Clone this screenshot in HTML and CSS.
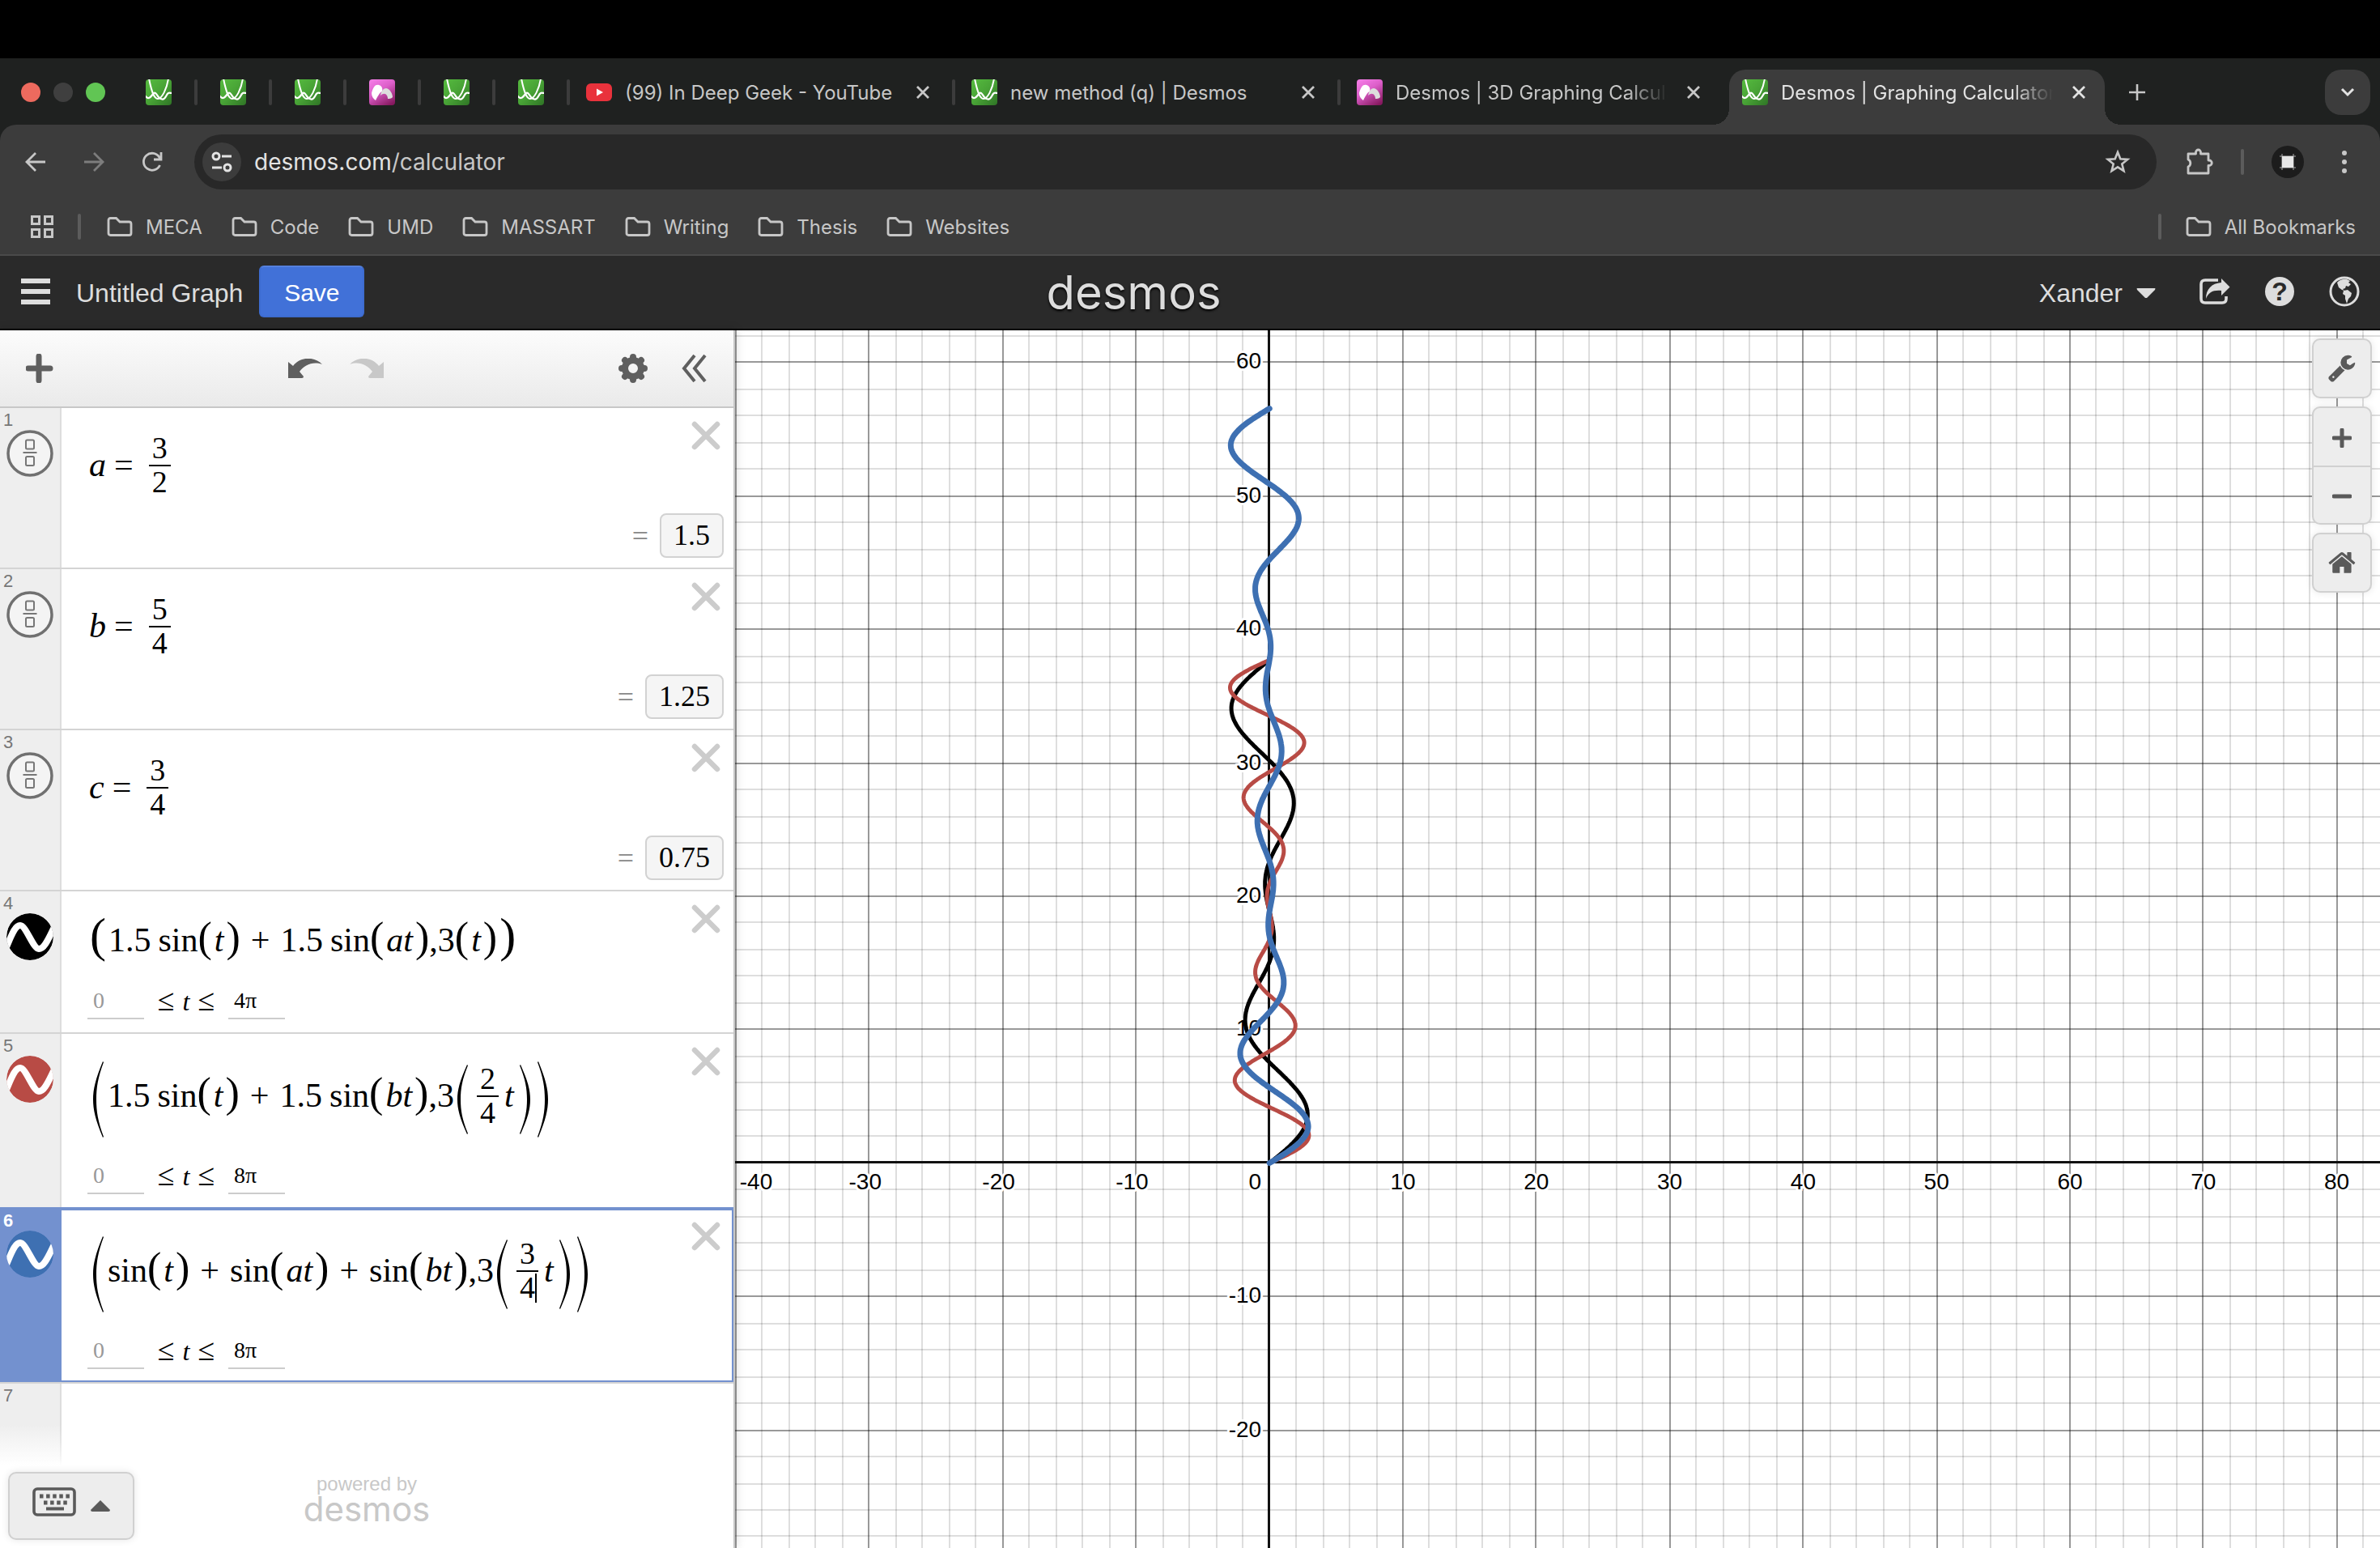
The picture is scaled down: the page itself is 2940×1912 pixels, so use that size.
FILE: index.html
```html
<!DOCTYPE html>
<html lang="en">
<head>
<meta charset="utf-8">
<title>Desmos | Graphing Calculator</title>
<link rel="stylesheet" href="styles.css">
</head>
<body>
<svg class="defs" width="0" height="0" aria-hidden="true">
  <defs>
    <linearGradient id="green" x1="0" y1="0" x2="1" y2="1"><stop offset="0" stop-color="#56bb3f"/><stop offset=".5" stop-color="#48a336"/><stop offset="1" stop-color="#2f7426"/></linearGradient>
    <linearGradient id="pink" x1="0.2" y1="0" x2="0.8" y2="1"><stop offset="0" stop-color="#f27be4"/><stop offset=".4" stop-color="#dd5fca"/><stop offset="1" stop-color="#86195f"/></linearGradient>
    <clipPath id="round32"><rect width="32" height="32" rx="4"/></clipPath>
    <clipPath id="disc"><circle cx="29" cy="29" r="29"/></clipPath>
    <symbol id="fav2d" viewBox="0 0 32 32"><g clip-path="url(#round32)"><rect width="32" height="32" fill="url(#green)"/><path d="M4 -1C7 14 10 24 15 24S26 12 28 -1" fill="none" stroke="#fff" stroke-width="2"/><path d="M-1 20C3 26 6 22 9 18S14 20 16 22S22 27 25 21S29 17 33 17" fill="none" stroke="#fff" stroke-width="2.200"/></g></symbol>
    <symbol id="fav3d" viewBox="0 0 32 32"><g clip-path="url(#round32)"><rect width="32" height="32" fill="url(#pink)"/><path d="M3 17C5 9 8 6 12 7C16 8 17 12 16 15C13 16 10 22 8 26C5 24 3 21 3 17Z" fill="#fff"/><path d="M14 20C15 14 18 11 21 11C26 12 29 18 29 22C27 24 25 24 23 24C23 19 19 15 14 20Z" fill="#ddd"/></g></symbol>
    <symbol id="cross" viewBox="0 0 20 20"><path d="M3 3L17 17M17 3L3 17" fill="none" stroke="currentColor" stroke-width="2.800"/></symbol>
    <symbol id="folder" viewBox="0 0 32 26"><path d="M2 5Q2 2.500 4.500 2.500H11.500L16 7H27.500Q30 7 30 9.500V21Q30 23.500 27.500 23.500H4.500Q2 23.500 2 21Z" fill="none" stroke="currentColor" stroke-width="2.800"/></symbol>
    <symbol id="frac" viewBox="0 0 58 58"><circle cx="29" cy="29" r="27" fill="#f4f4f4" stroke="#707070" stroke-width="3.500"/><g fill="none" stroke="#777" stroke-width="2"><rect x="24" y="12.500" width="10" height="11" rx="1.500"/><rect x="24" y="33" width="10" height="11" rx="1.500"/><path d="M20.500 28H37.500"/></g></symbol>
    <symbol id="wave" viewBox="0 0 58 58"><g clip-path="url(#disc)"><circle cx="29" cy="29" r="29" fill="currentColor"/><path d="M-1 44C6 28 10 15 17 15S33 44 40 44S52 31 59 17" fill="none" stroke="#fff" stroke-width="8"/></g></symbol>
    <symbol id="delete" viewBox="0 0 36 36"><path d="M4 4L32 32M32 4L4 32" fill="none" stroke="currentColor" stroke-width="6.500" stroke-linecap="round"/></symbol>
    <symbol id="tallL" viewBox="0 0 13 94" preserveAspectRatio="none"><path d="M12 0C3 22 0 34 0 47S3 72 12 94L13 93C6 74 4 62 4 47S6 20 13 1Z" fill="#000"/></symbol>
    <symbol id="tallR" viewBox="0 0 13 94" preserveAspectRatio="none"><path d="M1 0C10 22 13 34 13 47S10 72 1 94L0 93C7 74 9 62 9 47S7 20 0 1Z" fill="#000"/></symbol>
  </defs>
</svg>

<div class="menubar"></div>

<div class="browser">
  <div class="tabstrip">
    <div class="lights"><i class="red"></i><i class="dim"></i><i class="green"></i></div>
    <div class="pinned">
      <div class="pin"><svg class="fav"><use href="#fav2d"/></svg></div>
      <div class="pin"><svg class="fav"><use href="#fav2d"/></svg></div>
      <div class="pin"><svg class="fav"><use href="#fav2d"/></svg></div>
      <div class="pin"><svg class="fav"><use href="#fav3d"/></svg></div>
      <div class="pin"><svg class="fav"><use href="#fav2d"/></svg></div>
      <div class="pin"><svg class="fav"><use href="#fav2d"/></svg></div>
    </div>
    <div class="tab sep">
      <svg class="fav" viewBox="0 0 32 32"><rect y="5" width="32" height="22" rx="6" fill="#e9323c"/><path d="M13 11.500L21 16L13 20.500Z" fill="#fff"/></svg>
      <span class="tab-title">(99) In Deep Geek - YouTube</span>
      <button class="icon-btn" aria-label="Close tab"><svg class="x"><use href="#cross"/></svg></button>
    </div>
    <div class="tab sep">
      <svg class="fav"><use href="#fav2d"/></svg>
      <span class="tab-title">new method (q) | Desmos</span>
      <button class="icon-btn" aria-label="Close tab"><svg class="x"><use href="#cross"/></svg></button>
    </div>
    <div class="tab">
      <svg class="fav"><use href="#fav3d"/></svg>
      <span class="tab-title fade">Desmos | 3D Graphing Calculator</span>
      <button class="icon-btn" aria-label="Close tab"><svg class="x"><use href="#cross"/></svg></button>
    </div>
    <div class="tab active">
      <svg class="fav"><use href="#fav2d"/></svg>
      <span class="tab-title fade">Desmos | Graphing Calculator</span>
      <button class="icon-btn" aria-label="Close tab"><svg class="x"><use href="#cross"/></svg></button>
    </div>
    <button class="icon-btn newtab" aria-label="New tab"><svg width="22" height="22" viewBox="0 0 22 22"><path d="M11 1V21M1 11H21" stroke="#c7c7c7" stroke-width="2.600"/></svg></button>
    <button class="icon-btn tabsearch" aria-label="Search tabs"><svg width="20" height="14" viewBox="0 0 20 14"><path d="M3 3L10 10L17 3" fill="none" stroke="#e3e3e3" stroke-width="3"/></svg></button>
  </div>

  <div class="chrome">
    <div class="toolbar">
      <button class="icon-btn nav" aria-label="Back"><svg width="26" height="26" viewBox="0 0 26 26"><path d="M25 13H3M13 2L2 13L13 24" fill="none" stroke="#c7c7c7" stroke-width="2.800"/></svg></button>
      <button class="icon-btn nav" aria-label="Forward"><svg width="26" height="26" viewBox="0 0 26 26"><path d="M1 13H23M13 2L24 13L13 24" fill="none" stroke="#7d7d7d" stroke-width="2.800"/></svg></button>
      <button class="icon-btn nav" aria-label="Reload"><svg width="26" height="26" viewBox="0 0 26 26"><path d="M22.500 17A10.500 10.500 0 1 1 22 7.500L23.500 10M24 1V10H15" fill="none" stroke="#c7c7c7" stroke-width="2.800"/></svg></button>
      <div class="omnibox">
        <button class="icon-btn site" aria-label="Site information"><svg width="28" height="26" viewBox="0 0 28 26"><g fill="none" stroke="#e3e3e3" stroke-width="3"><circle cx="7" cy="6" r="4"/><circle cx="21" cy="20" r="4"/><path d="M14 6H26M2 20H14"/></g></svg></button>
        <span class="url">desmos.com<span>/calculator</span></span>
        <button class="icon-btn" aria-label="Bookmark this tab"><svg width="32" height="32" viewBox="0 0 32 32"><path d="M16 4L19.300 12.300L28.200 12.900L21.300 18.500L23.500 27.200L16 22.400L8.500 27.200L10.700 18.500L3.800 12.900L12.700 12.300Z" fill="none" stroke="#c7c7c7" stroke-width="2.600"/></svg></button>
      </div>
      <div class="actions">
        <button class="icon-btn" aria-label="Extensions"><svg width="34" height="34" viewBox="0 0 34 34"><path d="M3 7H12.500V5A3 3 0 0 1 18.500 5V7H28V15H29A3.200 3.200 0 0 1 29 21.500H28V31H3V23A5 5 0 0 0 3 14Z" fill="none" stroke="#c7c7c7" stroke-width="2.800" stroke-linejoin="round"/></svg></button>
        <i class="vsep"></i>
        <button class="icon-btn" aria-label="Profile"><svg width="40" height="40" viewBox="0 0 40 40"><circle cx="20" cy="20" r="20" fill="#1c1c1c"/><path d="M13 10V30M27 10V30M10 13H30M10 27H30" stroke="#aaa" stroke-width="1"/><rect x="13" y="13" width="14" height="14" fill="#e6e6e6"/></svg></button>
        <button class="icon-btn" aria-label="Menu"><svg width="8" height="30" viewBox="0 0 8 30"><g fill="#c7c7c7"><circle cx="4" cy="4" r="3"/><circle cx="4" cy="15" r="3"/><circle cx="4" cy="26" r="3"/></g></svg></button>
      </div>
    </div>
    <div class="bookmarks">
      <button class="icon-btn" aria-label="Tab groups"><svg width="28" height="28" viewBox="0 0 28 28"><g fill="none" stroke="#c7c7c7" stroke-width="3"><rect x="1.500" y="1.500" width="9" height="9"/><rect x="17.500" y="1.500" width="9" height="9"/><rect x="1.500" y="17.500" width="9" height="9"/><rect x="17.500" y="17.500" width="9" height="9"/></g></svg></button>
      <i class="vsep"></i>
      <a class="bm" href="#"><svg class="folder"><use href="#folder"/></svg>MECA</a>
      <a class="bm" href="#"><svg class="folder"><use href="#folder"/></svg>Code</a>
      <a class="bm" href="#"><svg class="folder"><use href="#folder"/></svg>UMD</a>
      <a class="bm" href="#"><svg class="folder"><use href="#folder"/></svg>MASSART</a>
      <a class="bm" href="#"><svg class="folder"><use href="#folder"/></svg>Writing</a>
      <a class="bm" href="#"><svg class="folder"><use href="#folder"/></svg>Thesis</a>
      <a class="bm" href="#"><svg class="folder"><use href="#folder"/></svg>Websites</a>
      <i class="vsep last"></i>
      <a class="bm" href="#"><svg class="folder"><use href="#folder"/></svg>All Bookmarks</a>
    </div>
  </div>
</div>

<header class="dheader">
  <div class="dleft">
    <button class="icon-btn" aria-label="Open graph menu"><svg width="36" height="32" viewBox="0 0 36 32"><path d="M0 3H36M0 16H36M0 29H36" stroke="#ddd" stroke-width="6"/></svg></button>
    <span class="graph-title">Untitled Graph</span>
    <button class="save">Save</button>
  </div>
  <a class="wordmark" href="#">desmos</a>
  <div class="dright">
    <button class="account"><span>Xander</span><svg width="26" height="14" viewBox="0 0 26 14"><path d="M2 1H24Q25 1 24 3L14 13H12L2 3Q1 1 2 1Z" fill="#ddd"/></svg></button>
    <button class="icon-btn" aria-label="Share"><svg width="38" height="32" viewBox="0 0 38 32"><path d="M23 2H7Q2 2 2 7V25Q2 30 7 30H28Q33 30 33 25V22" fill="none" stroke="#ddd" stroke-width="3.600"/><path d="M27 0L37.500 10.500L27 21V15C17 14 11 17 8 25C8 13 15 6 27 5Z" fill="#ddd"/></svg></button>
    <button class="icon-btn" aria-label="Help"><span class="help">?</span></button>
    <button class="icon-btn" aria-label="Language"><svg width="38" height="38" viewBox="0 0 38 38"><circle cx="19" cy="19" r="17" fill="none" stroke="#ddd" stroke-width="3"/><path d="M10 8Q15 3 22 4L26 6L24 8L27 10L24 13L21 12L20 15L17 16L19 18L16 17L12 14Z" fill="#ddd"/><path d="M18 18L23 17L28 21L27 25L24 28L22 34L20 28L20 24L17 22Z" fill="#ddd"/></svg></button>
  </div>
</header>

<main class="calc">
  <section class="panel" aria-label="Expression list">
    <div class="ptools">
      <button class="icon-btn" aria-label="Add item"><svg width="34" height="36" viewBox="0 0 34 36"><path d="M16 3V33M3 18H30" stroke="#5f5f5f" stroke-width="7" stroke-linecap="round"/></svg></button>
      <div class="undo">
        <button class="icon-btn" aria-label="Undo"><svg width="42" height="24" viewBox="0 0 42 24"><path d="M0 4L6 9C16 -4 34 -2 42 7C30 3 20 8 14 16L19 22Q19 24 17 24H0Z" fill="#5f5f5f"/></svg></button>
        <button class="icon-btn" aria-label="Redo"><svg width="42" height="24" viewBox="0 0 42 24"><path d="M42 4L36 9C26 -4 8 -2 0 7C12 3 22 8 28 16L23 22Q23 24 25 24H42Z" fill="#c8c8c8"/></svg></button>
      </div>
      <div class="pright">
        <button class="icon-btn" aria-label="Edit list"><svg width="36" height="36" viewBox="-18 -18 36 36"><g stroke="#5f5f5f" stroke-width="8" stroke-linecap="round"><path d="M0 -14V-10M0 14V10M-14 0H-10M14 0H10M-10 -10L-8 -8M10 10L8 8M-10 10L-8 8M10 -10L8 -8"/></g><circle r="10" fill="none" stroke="#5f5f5f" stroke-width="8"/></svg></button>
        <button class="icon-btn" aria-label="Hide list"><svg width="34" height="36" viewBox="0 0 34 36"><path d="M18 2L5 18L18 34M31 2L18 18L31 34" fill="none" stroke="#5f5f5f" stroke-width="4"/></svg></button>
      </div>
    </div>

    <div class="list">
      <div class="row">
        <div class="gutter"><span>1</span><svg class="badge"><use href="#frac"/></svg></div>
        <div class="body">
          <div class="math"><i>a</i><span class="eq">=</span><span class="fraction"><span>3</span><span>2</span></span></div>
          <div class="result"><span>=</span><output>1.5</output></div>
        </div>
        <button class="icon-btn del" aria-label="Delete"><svg><use href="#delete"/></svg></button>
      </div>
      <div class="row">
        <div class="gutter"><span>2</span><svg class="badge"><use href="#frac"/></svg></div>
        <div class="body">
          <div class="math"><i>b</i><span class="eq">=</span><span class="fraction"><span>5</span><span>4</span></span></div>
          <div class="result"><span>=</span><output>1.25</output></div>
        </div>
        <button class="icon-btn del" aria-label="Delete"><svg><use href="#delete"/></svg></button>
      </div>
      <div class="row">
        <div class="gutter"><span>3</span><svg class="badge"><use href="#frac"/></svg></div>
        <div class="body">
          <div class="math"><i>c</i><span class="eq">=</span><span class="fraction"><span>3</span><span>4</span></span></div>
          <div class="result"><span>=</span><output>0.75</output></div>
        </div>
        <button class="icon-btn del" aria-label="Delete"><svg><use href="#delete"/></svg></button>
      </div>
      <div class="row">
        <div class="gutter"><span>4</span><svg class="badge black"><use href="#wave"/></svg></div>
        <div class="body">
          <div class="math"><span class="p2">(</span>1.5<span class="fn">sin</span><span class="p1">(</span><i>t</i><span class="p1">)</span><span class="op">+</span>1.5<span class="fn">sin</span><span class="p1">(</span><i>at</i><span class="p1">)</span>,3<span class="p1">(</span><i>t</i><span class="p1">)</span><span class="p2">)</span></div>
          <div class="domain"><input aria-label="Minimum t" placeholder="0"><span>≤<i>t</i>≤</span><input aria-label="Maximum t" value="4π"></div>
        </div>
        <button class="icon-btn del" aria-label="Delete"><svg><use href="#delete"/></svg></button>
      </div>
      <div class="row">
        <div class="gutter"><span>5</span><svg class="badge brick"><use href="#wave"/></svg></div>
        <div class="body">
          <div class="math"><svg class="tall"><use href="#tallL"/></svg>1.5<span class="fn">sin</span><span class="p1">(</span><i>t</i><span class="p1">)</span><span class="op">+</span>1.5<span class="fn">sin</span><span class="p1">(</span><i>bt</i><span class="p1">)</span>,3<svg class="tall in"><use href="#tallL"/></svg><span class="fraction"><span>2</span><span>4</span></span><i>t</i><svg class="tall in"><use href="#tallR"/></svg><svg class="tall"><use href="#tallR"/></svg></div>
          <div class="domain"><input aria-label="Minimum t" placeholder="0"><span>≤<i>t</i>≤</span><input aria-label="Maximum t" value="8π"></div>
        </div>
        <button class="icon-btn del" aria-label="Delete"><svg><use href="#delete"/></svg></button>
      </div>
      <div class="row selected">
        <div class="gutter"><span>6</span><svg class="badge blue"><use href="#wave"/></svg></div>
        <div class="body">
          <div class="math"><svg class="tall"><use href="#tallL"/></svg>sin<span class="p1">(</span><i>t</i><span class="p1">)</span><span class="op">+</span>sin<span class="p1">(</span><i>at</i><span class="p1">)</span><span class="op">+</span>sin<span class="p1">(</span><i>bt</i><span class="p1">)</span>,3<svg class="tall in"><use href="#tallL"/></svg><span class="fraction"><span>3</span><span class="caret">4</span></span><i>t</i><svg class="tall in"><use href="#tallR"/></svg><svg class="tall"><use href="#tallR"/></svg></div>
          <div class="domain"><input aria-label="Minimum t" placeholder="0"><span>≤<i>t</i>≤</span><input aria-label="Maximum t" value="8π"></div>
        </div>
        <button class="icon-btn del" aria-label="Delete"><svg><use href="#delete"/></svg></button>
      </div>
      <div class="row empty">
        <div class="gutter"><span>7</span></div>
        <div class="body"></div>
      </div>
    </div>

    <div class="pfoot">
      <button class="keypad" aria-label="Show keypad">
        <svg width="54" height="36" viewBox="0 0 54 36"><rect x="2" y="2" width="50" height="32" rx="4" fill="none" stroke="#5a5a5a" stroke-width="3.600"/><path d="M9 11H46" stroke="#5a5a5a" stroke-width="5" stroke-dasharray="4.500 3.600"/><path d="M14 19H43" stroke="#5a5a5a" stroke-width="5" stroke-dasharray="4.500 3.600"/><path d="M17 26.500H39" stroke="#5a5a5a" stroke-width="4"/></svg>
        <svg width="24" height="14" viewBox="0 0 24 14"><path d="M12 0L24 12Q24 14 22 14H2Q0 14 0 12Z" fill="#5a5a5a"/></svg>
      </button>
      <a class="powered" href="#"><span>powered by</span><b>desmos</b></a>
    </div>
  </section>

  <section class="graph" aria-label="Graph">
    <svg id="plot" role="img" aria-label="Three parametric curves"></svg>
    <div class="gtools">
      <button class="gbtn" aria-label="Graph settings"><svg width="34" height="34" viewBox="90 90 1650 1700"><path fill="#5a5a5a" d="M448 1472q0-26-19-45t-45-19-45 19-19 45 19 45 45 19 45-19 19-45zm644-420l-682 682q-37 37-90 37-52 0-91-37l-106-108q-38-36-38-90 0-53 38-91l681-681q39 98 114.500 173.500t173.500 114.500zm634-435q0 39-23 106-47 134-164.500 217.500t-258.500 83.500q-185 0-316.500-131.500t-131.500-316.500 131.500-316.500 316.500-131.500q58 0 121.500 16.500t107.500 46.500q16 11 16 28t-16 28l-293 169v224l193 107q5-3 79-48.500t135.500-81 70.500-35.500q15 0 23.500 10t8.500 25z"/></svg></button>
      <div class="zoom">
        <button aria-label="Zoom in"><svg width="24" height="24" viewBox="0 0 24 24"><path d="M12 2V22M2 12H22" stroke="#5a5a5a" stroke-width="5" stroke-linecap="round"/></svg></button>
        <button aria-label="Zoom out"><svg width="24" height="24" viewBox="0 0 24 24"><path d="M2 12H22" stroke="#5a5a5a" stroke-width="5" stroke-linecap="round"/></svg></button>
      </div>
      <button class="gbtn" aria-label="Default viewport"><svg width="34" height="34" viewBox="60 60 1680 1680"><path fill="#5a5a5a" d="M1472 992v480q0 26-19 45t-45 19h-384v-384h-256v384h-384q-26 0-45-19t-19-45v-480q0-1 .5-3t.5-3l575-474 575 474q1 2 1 6zm223-69l-62 74q-8 9-21 11h-3q-13 0-21-7l-692-577-692 577q-12 8-24 7-13-2-21-11l-62-74q-8-10-7-23.500t11-21.500l719-599q32-26 76-26t76 26l244 204v-195q0-14 9-23t23-9h192q14 0 23 9t9 23v408l219 182q10 8 11 21.500t-7 23.500z"/></svg></button>
    </div>
  </section>
</main>
<script src="graph.js"></script>
</body>
</html>
```

FILE: styles.css
```css
* { box-sizing: border-box; }

body {
  margin: 0;
  min-height: 100vh;
  display: flex;
  flex-direction: column;
  background: #fff;
  font-family: "Liberation Sans", Arial, sans-serif;
  color: #000;
}

button {
  margin: 0;
  padding: 0;
  border: 0;
  background: none;
  font: inherit;
  color: inherit;
}

a { color: inherit; text-decoration: none; }
svg { display: block; flex: none; }
.defs { position: absolute; }
.icon-btn { display: flex; align-items: center; justify-content: center; flex: none; }

/* Browser chrome */
.menubar { height: 72px; background: #000; }

.browser {
  background: #1f2120;
  font-family: Inter, "Noto Sans", sans-serif;
  color: #c7c7c7;
}

.tabstrip {
  display: flex;
  align-items: center;
  height: 82px;
  padding: 2px 12px 0 26px;
}

.lights { display: flex; gap: 16px; margin-right: 50px; }
.lights i { width: 24px; height: 24px; border-radius: 50%; }
.lights .red { background: #ed6a5e; }
.lights .dim { background: #3f3f3f; }
.lights .green { background: #61c554; }

.fav { width: 32px; height: 32px; }
.x { width: 20px; height: 20px; }

.pinned { display: flex; gap: 28px; }
.pin { display: flex; gap: 28px; }
.pin::after, .tab.sep::after {
  content: "";
  width: 4px;
  height: 32px;
  border-radius: 2px;
  background: #3c3c3c;
}

.tab {
  display: flex;
  align-items: center;
  width: 476px;
  height: 56px;
  padding-left: 20px;
  font-size: 24px;
}
.tab.sep .icon-btn { margin-right: 26px; }
.tab-title {
  flex: 1;
  min-width: 0;
  margin: 0 22px 0 16px;
  overflow: hidden;
  white-space: nowrap;
}
.tab:not(.sep) .icon-btn { margin-right: 30px; }
.fade { mask-image: linear-gradient(to right, #000 85%, transparent); }

.tab.active {
  position: relative;
  align-self: flex-end;
  width: 464px;
  height: 68px;
  margin-left: 4px;
  padding: 0 0 12px 16px;
  border-radius: 20px 20px 0 0;
  background: #3c3c3c;
  color: #e3e3e3;
}
.tab.active .icon-btn { margin-right: 22px; }
.tab.active::before, .tab.active::after {
  content: "";
  position: absolute;
  bottom: 0;
  width: 20px;
  height: 20px;
}
.tab.active::before { left: -20px; background: radial-gradient(circle at 0 0, transparent 20px, #3c3c3c 20px); }
.tab.active::after { right: -20px; background: radial-gradient(circle at 100% 0, transparent 20px, #3c3c3c 20px); }

.newtab { margin-left: 29px; }
.tabsearch {
  width: 56px;
  height: 56px;
  margin-left: auto;
  border-radius: 20px;
  background: #3c3c3c;
}

.chrome {
  border-radius: 20px 20px 0 0;
  background: #3c3c3c;
  border-bottom: 2px solid #4a4a4a;
}

.toolbar {
  display: flex;
  align-items: center;
  padding: 12px 40px 12px 8px;
}
.nav { width: 72px; }
.omnibox {
  flex: 1;
  display: flex;
  align-items: center;
  gap: 16px;
  height: 68px;
  margin-left: 16px;
  padding: 0 32px 0 10px;
  border-radius: 34px;
  background: #282828;
}
.site { width: 48px; height: 48px; border-radius: 50%; background: #3c3c3c; }
.url { flex: 1; font-size: 28px; color: #e3e3e3; }
.url span { color: #c7c7c7; }
.actions { display: flex; align-items: center; gap: 34px; margin-left: 36px; }
.actions .icon-btn:last-child { margin-left: 12px; }
.vsep { width: 4px; height: 32px; border-radius: 2px; background: #5c5c5c; }

.bookmarks {
  display: flex;
  align-items: center;
  height: 68px;
  padding: 0 30px 0 38px;
  gap: 36px;
  font-size: 24px;
}
.bookmarks .vsep { margin: 0 -4px 0 -6px; }
.bookmarks .vsep.last { margin: 0 -6px 0 auto; }
.bm { display: flex; align-items: center; gap: 16px; white-space: nowrap; }
.folder { width: 32px; height: 26px; }

/* Calculator header */
.dheader {
  display: grid;
  grid-template-columns: 1fr auto 1fr;
  align-items: center;
  height: 92px;
  padding: 0 25px 2px 26px;
  border-bottom: 2px solid #000;
  background: #2a2a2a;
  color: #ddd;
  font-size: 32px;
}
.dleft { display: flex; align-items: center; }
.graph-title { margin: 0 20px 0 32px; padding-top: 4px; }
.save {
  width: 130px;
  height: 64px;
  padding-top: 4px;
  border: 2px solid #3d6cd0;
  border-top-color: #5580dc;
  border-radius: 6px;
  background: #4171d8;
  color: #fff;
  font-size: 30px;
}
.wordmark {
  margin-right: 140px;
  padding-top: 2px;
  font-family: Inter, sans-serif;
  font-size: 58px;
  line-height: 72px;
  text-shadow: 0 2px 3px #000;
}
.dright { display: flex; align-items: center; justify-content: flex-end; gap: 43px; }
.account { display: flex; align-items: center; gap: 16px; margin-right: 10px; padding-top: 4px; }
.help {
  width: 36px;
  height: 36px;
  border-radius: 50%;
  background: #ddd;
  color: #2a2a2a;
  font-size: 32px;
  font-weight: bold;
  line-height: 36px;
  text-align: center;
}

/* Expression panel */
.calc { flex: 1; display: flex; min-height: 0; }
.panel {
  position: relative;
  z-index: 1;
  display: flex;
  flex-direction: column;
  width: 908px;
  flex: none;
  border-right: 2px solid #c8c8c8;
  background: #fff;
  box-shadow: 0 0 12px rgba(0, 0, 0, .2);
}
.ptools {
  display: grid;
  grid-template-columns: 1fr auto 1fr;
  align-items: center;
  height: 96px;
  padding: 0 32px;
  border-bottom: 2px solid #c8c8c8;
  background: linear-gradient(#fcfcfc, #eaeaea);
}
.ptools > .icon-btn { justify-self: start; }
.undo { display: flex; gap: 34px; margin-right: 76px; }
.pright { display: flex; gap: 40px; justify-content: flex-end; }

.list { flex: 1; display: flex; flex-direction: column; }
.row {
  position: relative;
  display: flex;
  border-bottom: 2px solid #d4d4d4;
}
.gutter {
  width: 76px;
  flex: none;
  padding: 4px 0 0 4px;
  border-right: 2px solid #ddd;
  background: #eee;
  color: #777;
  font-size: 22px;
  line-height: 22px;
}
.gutter span { display: block; height: 23px; }
.badge { width: 58px; height: 58px; margin-left: 4px; }
.badge.black { color: #000; }
.badge.brick { color: #b84b45; }
.badge.blue { color: #3e70b2; }

.body { flex: 1; padding: 28px 12px 12px 32px; }
.del {
  position: absolute;
  top: 16px;
  right: 16px;
  color: #ccc;
}
.del svg { width: 36px; height: 36px; }

.math {
  font-family: "Liberation Serif", "Times New Roman", serif;
  font-size: 42px;
  line-height: 64px;
  white-space: nowrap;
}
.math > i { margin: 0 3px; }
.math > i:first-child { margin-left: 2px; }
.eq { margin: 0 10px 0 7px; }
.op { margin: 0 13px; }
.fn { margin-left: 9px; }
.p1, .p2 { line-height: 0; }
.p1 { font-size: 52px; }
.p2 { margin: 0 3px; font-size: 60px; }
.tall {
  display: inline-block;
  width: 13px;
  height: 94px;
  margin: 6px 5px 4px 7px;
  vertical-align: middle;
}
.tall.in { height: 86px; margin: 10px 2px 8px 4px; }
.fraction {
  display: inline-flex;
  flex-direction: column;
  margin: 0 4px 0 9px;
  padding-bottom: 10px;
  vertical-align: middle;
  font-size: 38px;
  line-height: 42px;
  text-align: center;
}
.fraction span { padding: 0 4px; }
.fraction span + span { border-top: 2px solid #000; line-height: 38px; }
.caret { background: linear-gradient(#000, #000) 23px 2px / 2px 36px no-repeat; }

.result {
  display: flex;
  align-items: center;
  justify-content: flex-end;
  gap: 14px;
  margin-top: 10px;
  font-family: "Liberation Serif", "Times New Roman", serif;
  font-size: 36px;
}
.result span { color: #888; }
.result output {
  height: 55px;
  padding: 0 15px;
  border: 2px solid #d2d2d2;
  border-radius: 8px;
  background: #f5f5f5;
  line-height: 51px;
}

.domain {
  display: flex;
  align-items: center;
  margin: 20px 0 3px;
  font-family: "Liberation Serif", "Times New Roman", serif;
  font-size: 38px;
  line-height: 45px;
}
.domain span { width: 104px; text-align: center; white-space: nowrap; }
.domain i { margin: 0 10px; font-size: 32px; }
.domain input {
  width: 70px;
  height: 45px;
  padding: 0 7px;
  border: 0;
  border-bottom: 2px solid #ccc;
  background: none;
  color: #000;
  font-family: inherit;
  font-size: 28px;
}
.domain input::placeholder { color: #999; }

.selected .gutter {
  border-color: #7391cf;
  background: #7391cf;
  color: #fff;
  font-weight: bold;
}
.selected::after {
  content: "";
  position: absolute;
  inset: -2px 0 0 0;
  border: 2px solid #7391cf;
  border-top-width: 4px;
  pointer-events: none;
}

.empty { flex: 1; border: 0; }
.empty .gutter {
  border-image: linear-gradient(#ddd 50%, transparent) 1;
  border-width: 0 2px 0 0;
  border-style: solid;
  background: linear-gradient(#eee 50%, #fff);
}

.pfoot {
  display: grid;
  grid-template-columns: 1fr auto 1fr;
  align-items: center;
  padding: 8px 10px 10px;
}
.keypad {
  display: flex;
  align-items: center;
  justify-content: center;
  gap: 18px;
  width: 156px;
  height: 84px;
  border: 2px solid #d0d0d0;
  border-radius: 10px;
  background: #ededed;
  box-shadow: 0 0 10px rgba(0, 0, 0, .1);
}
.keypad svg { margin-bottom: 10px; }
.keypad svg + svg { margin-bottom: 0; }
.powered { margin-bottom: 16px; text-align: center; color: #c8c8c8; font-size: 24px; line-height: 24px; }
.powered span, .powered b { display: block; }
.powered b { font-family: Inter, sans-serif; font-size: 42px; font-weight: 400; line-height: 38px; }

/* Graph paper */
.graph { position: relative; flex: 1; min-width: 0; overflow: hidden; }
#plot { position: absolute; inset: 0; width: 100%; height: 100%; }
.minor { stroke: rgba(0, 0, 0, .13); stroke-width: 2; }
.major { stroke: rgba(0, 0, 0, .4); stroke-width: 2; }
.axis { stroke: #111; stroke-width: 3; }
.tick {
  font-size: 28px;
  fill: #000;
  stroke: #fff;
  stroke-width: 6;
  stroke-linejoin: round;
  paint-order: stroke;
}
.curve { fill: none; stroke-linecap: round; stroke-linejoin: round; }

.gtools {
  position: absolute;
  top: 10px;
  right: 10px;
  display: flex;
  flex-direction: column;
  gap: 10px;
}
.gbtn, .zoom {
  width: 74px;
  border: 2px solid #d0d0d0;
  border-radius: 10px;
  background: #ededed;
  box-shadow: 0 0 10px rgba(0, 0, 0, .1);
}
.gbtn, .zoom button { display: flex; align-items: center; justify-content: center; }
.gbtn { height: 74px; }
.zoom button { width: 70px; height: 71px; padding-top: 3px; }
.zoom button + button { border-top: 2px solid #d0d0d0; }
```

FILE: graph.js
```js
const NS = 'http://www.w3.org/2000/svg';
const plot = document.getElementById('plot');
const view = { xmin: -40.06, xmax: 83.24, ymax: 62.41 };
const a = 3 / 2, b = 5 / 4;
const curves = [
  { color: '#000', width: 5, end: 4 * Math.PI, f: t => [1.5 * Math.sin(t) + 1.5 * Math.sin(a * t), 3 * t] },
  { color: '#b84b45', width: 5, end: 8 * Math.PI, f: t => [1.5 * Math.sin(t) + 1.5 * Math.sin(b * t), 3 * (2 / 4) * t] },
  { color: '#3e70b2', width: 7, end: 8 * Math.PI, f: t => [Math.sin(t) + Math.sin(a * t) + Math.sin(b * t), 3 * (3 / 4) * t] }
];

function add(name, attrs, text) {
  const el = document.createElementNS(NS, name);
  for (const key in attrs) el.setAttribute(key, attrs[key]);
  if (text !== undefined) el.textContent = text;
  plot.appendChild(el);
}

// Two-pixel grid lines stay crisp when they are centred on odd coordinates.
const snap = v => 2 * Math.floor(v / 2) + 1;

function draw() {
  plot.replaceChildren();
  const w = plot.clientWidth, h = plot.clientHeight;
  const scale = w / (view.xmax - view.xmin);
  const px = x => (x - view.xmin) * scale;
  const py = y => (view.ymax - y) * scale;
  const ymin = view.ymax - h / scale;

  for (const major of [false, true]) {
    for (let v = -100; v <= 100; v += 2) {
      if (v === 0 || (v % 10 === 0) !== major) continue;
      const cls = major ? 'major' : 'minor';
      if (v > view.xmin && v < view.xmax) add('line', { class: cls, x1: snap(px(v)), x2: snap(px(v)), y1: 0, y2: h });
      if (v > ymin && v < view.ymax) add('line', { class: cls, y1: snap(py(v)), y2: snap(py(v)), x1: 0, x2: w });
    }
  }
  const ax = Math.floor(px(0)) - 0.5, ay = Math.floor(py(0)) - 0.5;
  add('line', { class: 'axis', x1: ax, x2: ax, y1: 0, y2: h });
  add('line', { class: 'axis', x1: 0, x2: w, y1: ay, y2: ay });

  for (let v = -100; v <= 100; v += 10) {
    if (v === 0) continue;
    if (v >= Math.floor(view.xmin) && v < view.xmax) {
      const x = px(v) - (v < 0 ? 5 : 0);
      add('text', { class: 'tick', x: Math.max(x, 26), y: py(0) + 32, 'text-anchor': 'middle' }, v);
    }
    if (v > ymin && v < view.ymax) add('text', { class: 'tick', x: px(0) - 10, y: snap(py(v)) + 8, 'text-anchor': 'end' }, v);
  }
  add('text', { class: 'tick', x: px(0) - 10, y: py(0) + 32, 'text-anchor': 'end' }, 0);

  for (const c of curves) {
    const points = [];
    for (let i = 0; i <= 600; i++) {
      const [x, y] = c.f(c.end * i / 600);
      points.push(px(x).toFixed(1) + ',' + py(y).toFixed(1));
    }
    add('polyline', { class: 'curve', stroke: c.color, 'stroke-width': c.width, points: points.join(' ') });
  }
}

draw();
window.addEventListener('resize', draw);
```
